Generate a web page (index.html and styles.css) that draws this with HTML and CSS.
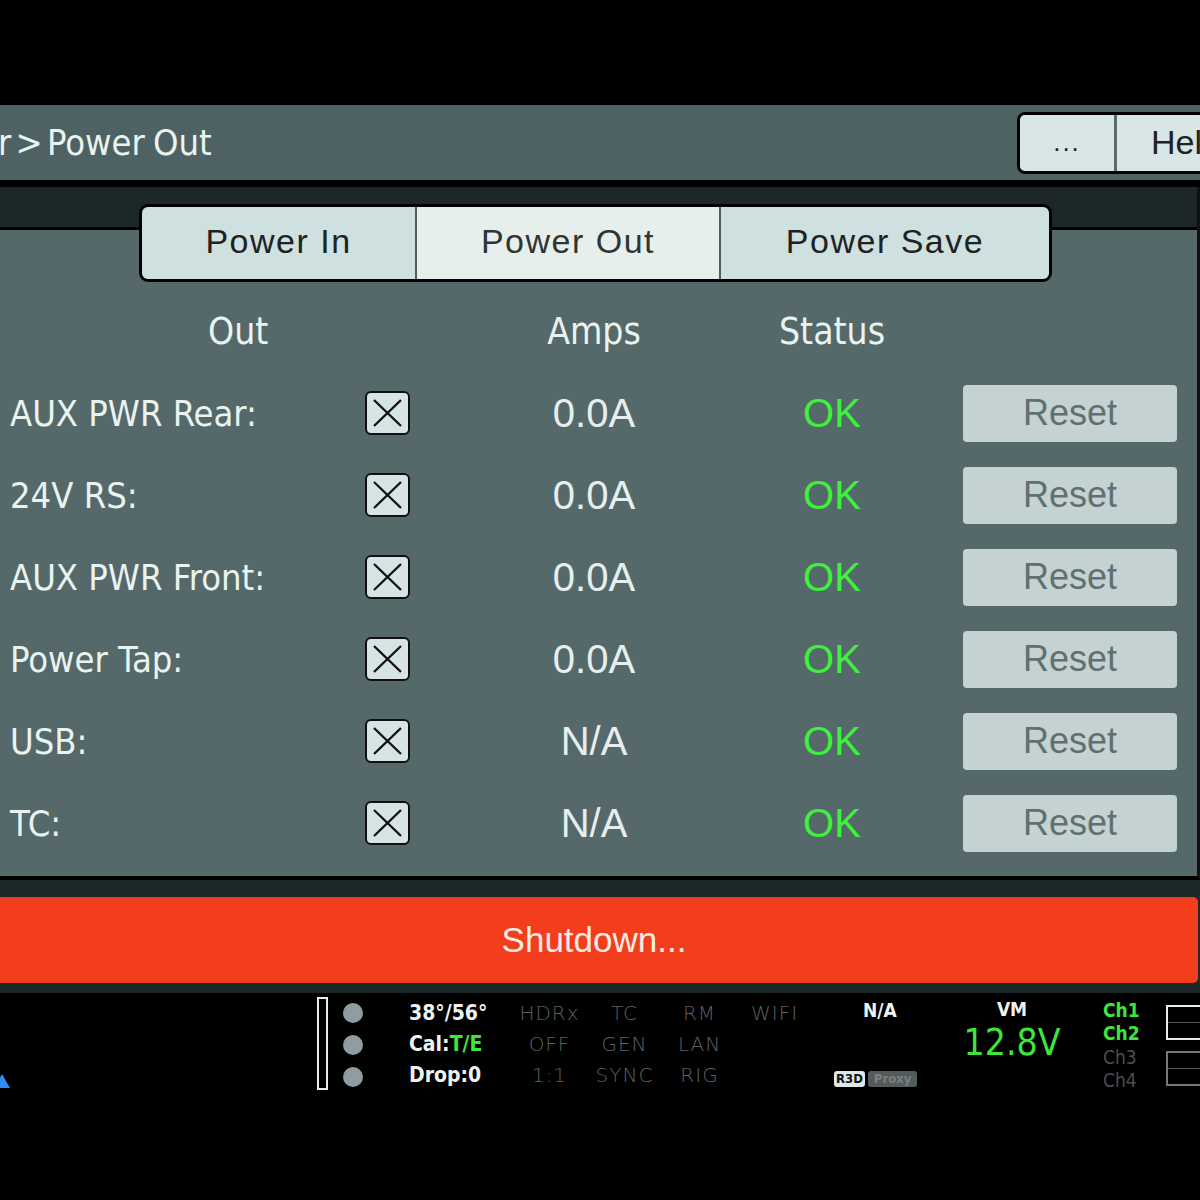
FILE: index.html
```html
<!DOCTYPE html>
<html lang="en">
<head>
    <meta charset="UTF-8">
    <meta name="viewport" content="width=device-width, initial-scale=1.0">
    <title>Power Out</title>
    <link rel="stylesheet" href="styles.css">
</head>
<body>
    <div class="screen">
        <header class="titlebar">
            <div class="crumb">r &gt; <span class="crumb-page">Power Out</span></div>
            <div class="title-buttons">
                <button class="tb-btn tb-more">...</button>
                <button class="tb-btn tb-help">Help</button>
            </div>
        </header>

        <section class="panel">
            <div class="tabs">
                <button class="tab tab-in">Power In</button>
                <button class="tab tab-out active">Power Out</button>
                <button class="tab tab-save">Power Save</button>
            </div>

            <div class="grid">
                <div class="head col-out">Out</div>
                <div class="head col-amps">Amps</div>
                <div class="head col-status">Status</div>
                <div class="head"></div>

                <div class="label">AUX PWR Rear:</div>
                <div class="check"><svg viewBox="0 0 41 40"><path d="M7 7 L34 33 M34 7 L7 33"/></svg></div>
                <div class="amps">0.0A</div>
                <div class="status">OK</div>
                <div class="reset-cell"><button class="reset">Reset</button></div>

                <div class="label">24V RS:</div>
                <div class="check"><svg viewBox="0 0 41 40"><path d="M7 7 L34 33 M34 7 L7 33"/></svg></div>
                <div class="amps">0.0A</div>
                <div class="status">OK</div>
                <div class="reset-cell"><button class="reset">Reset</button></div>

                <div class="label">AUX PWR Front:</div>
                <div class="check"><svg viewBox="0 0 41 40"><path d="M7 7 L34 33 M34 7 L7 33"/></svg></div>
                <div class="amps">0.0A</div>
                <div class="status">OK</div>
                <div class="reset-cell"><button class="reset">Reset</button></div>

                <div class="label">Power Tap:</div>
                <div class="check"><svg viewBox="0 0 41 40"><path d="M7 7 L34 33 M34 7 L7 33"/></svg></div>
                <div class="amps">0.0A</div>
                <div class="status">OK</div>
                <div class="reset-cell"><button class="reset">Reset</button></div>

                <div class="label">USB:</div>
                <div class="check"><svg viewBox="0 0 41 40"><path d="M7 7 L34 33 M34 7 L7 33"/></svg></div>
                <div class="amps">N/A</div>
                <div class="status">OK</div>
                <div class="reset-cell"><button class="reset">Reset</button></div>

                <div class="label">TC:</div>
                <div class="check"><svg viewBox="0 0 41 40"><path d="M7 7 L34 33 M34 7 L7 33"/></svg></div>
                <div class="amps">N/A</div>
                <div class="status">OK</div>
                <div class="reset-cell"><button class="reset">Reset</button></div>
            </div>
        </section>

        <div class="shutdown-wrap">
            <button class="shutdown">Shutdown...</button>
        </div>

        <footer class="statusbar">
            <div class="st-left"><span class="blue-tri"></span></div>
            <div class="st-meter"></div>
            <div class="st-dots">
                <span class="dot"></span>
                <span class="dot"></span>
                <span class="dot"></span>
            </div>
            <div class="st-info">
                <div>38°/56°</div>
                <div>Cal:<span class="green">T/E</span></div>
                <div>Drop:0</div>
            </div>
            <div class="st-modes">
                <span>HDRx</span><span>TC</span><span>RM</span><span>WIFI</span>
                <span>OFF</span><span>GEN</span><span>LAN</span><span></span>
                <span>1:1</span><span>SYNC</span><span>RIG</span><span></span>
            </div>
            <div class="st-media">
                <div class="na">N/A</div>
                <div class="badges">
                    <span class="badge r3d">R3D</span><span class="badge proxy">Proxy</span>
                </div>
            </div>
            <div class="st-volt">
                <div class="vm">VM</div>
                <div class="volts">12.8V</div>
            </div>
            <div class="st-ch">
                <div class="green">Ch1</div>
                <div class="green">Ch2</div>
                <div class="dim">Ch3</div>
                <div class="dim">Ch4</div>
            </div>
            <div class="st-rec">
                <div class="rec-box on"></div>
                <div class="rec-box"></div>
            </div>
        </footer>
    </div>
</body>
</html>
```

FILE: styles.css
```css
body {
    margin: 0;
    background: #000;
    font-family: "Liberation Sans", Arial, sans-serif;
    overflow: hidden;
}

.screen {
    width: 1200px;
    height: 1200px;
    padding-top: 105px;
    box-sizing: border-box;
    overflow: hidden;
}

/* title bar */
.titlebar {
    height: 75px;
    background: #4e6263;
    border-bottom: 7px solid #000;
    display: flex;
    align-items: center;
    justify-content: space-between;
}

.crumb {
    margin-left: -2px;
    font-family: "DejaVu Sans Condensed", sans-serif;
    font-size: 36px;
    word-spacing: -6px;
    color: #e9f3ef;
    white-space: nowrap;
}

.crumb-page {
    word-spacing: -2px;
}

.title-buttons {
    display: flex;
    flex-shrink: 0;
    height: 62px;
    margin-right: -120px;
    border: 3px solid #000;
    border-radius: 8px;
    overflow: hidden;
    box-sizing: border-box;
}

.tb-btn {
    background: #d8e6e6;
    border: none;
    font-family: "Liberation Sans", Arial, sans-serif;
    font-size: 34px;
    color: #222;
    padding: 0;
}

.tb-more {
    width: 97px;
    font-size: 26px;
    letter-spacing: 2px;
    border-right: 3px solid #5a6a6a;
}

.tb-help {
    width: 200px;
    text-align: left;
    padding-left: 34px;
}

/* main panel */
.panel {
    background: linear-gradient(to bottom, #1c2727 0, #1c2727 40px, #000 40px, #000 43px, #55696a 43px);
    border-right: 3px solid #111;
    border-bottom: 4px solid #000;
    padding: 17px 20px 12px 10px;
}

.tabs {
    display: flex;
    margin-left: 129px;
    width: 913px;
    height: 78px;
    border: 3px solid #000;
    border-radius: 9px;
    overflow: hidden;
    box-sizing: border-box;
}

.tab {
    background: #cfe0e0;
    border: none;
    padding: 0 0 4px;
    font-family: "Liberation Sans", Arial, sans-serif;
    font-size: 34px;
    letter-spacing: 1.5px;
    color: #1e2222;
}

.tab-in {
    width: 275px;
    border-right: 2px solid #4e5e5e;
}

.tab-out {
    width: 304px;
    border-right: 2px solid #4e5e5e;
}

.tab-save {
    flex: 1;
}

.tab.active {
    background: #e7efed;
    color: #2f3434;
}

.grid {
    display: grid;
    grid-template-columns: 355px 45px 368px 108px 1fr;
    grid-auto-rows: 82px;
    grid-template-rows: 90px;
    align-items: center;
    color: #e9f3ef;
}

.head {
    font-family: "DejaVu Sans Condensed", sans-serif;
    font-size: 37px;
    padding-top: 8px;
    text-align: center;
}

.col-out {
    grid-column: 1 / 3;
    text-align: left;
    padding-left: 198px;
}

.col-amps {
    grid-column: 3;
}

.label {
    font-family: "DejaVu Sans Condensed", sans-serif;
    font-size: 36px;
    white-space: nowrap;
}

.check {
    width: 45px;
    height: 44px;
    background: #d6e4e4;
    border: 2px solid #111;
    border-radius: 6px;
    box-sizing: border-box;
}

.check svg {
    display: block;
    width: 100%;
    height: 100%;
    stroke: #111;
    stroke-width: 2.4;
    fill: none;
}

.amps {
    text-align: center;
    font-size: 40px;
    color: #e6efed;
}

.status {
    text-align: center;
    font-size: 40px;
    color: #3df23a;
}

.reset-cell {
    display: flex;
    justify-content: flex-end;
}

.reset {
    width: 214px;
    height: 57px;
    background: #c4d2d2;
    border: none;
    border-radius: 4px;
    font-family: "Liberation Sans", Arial, sans-serif;
    font-size: 36px;
    color: #5f7070;
    padding: 0;
}

/* shutdown */
.shutdown-wrap {
    background: #1d2828;
    padding: 17px 2px 10px 0;
}

.shutdown {
    display: block;
    width: 100%;
    height: 86px;
    background: #f23e1c;
    border: none;
    border-radius: 0 5px 5px 0;
    font-family: "Liberation Sans", Arial, sans-serif;
    font-size: 35px;
    color: #fcebe4;
    padding: 0 10px 0 0;
}

/* bottom status bar */
.statusbar {
    display: flex;
    align-items: flex-start;
    padding-top: 2px;
    color: #eef3f0;
    font-family: "DejaVu Sans Condensed", sans-serif;
    font-weight: bold;
}

.statusbar > div {
    flex-shrink: 0;
}

.green {
    color: #3ee63a;
}

.dim {
    color: #4a4f4f;
    font-weight: normal;
}

.st-left {
    width: 317px;
    height: 100px;
    display: flex;
    align-items: flex-end;
}

.blue-tri {
    width: 0;
    height: 0;
    margin-left: -6px;
    margin-bottom: 7px;
    border-left: 8px solid transparent;
    border-right: 8px solid transparent;
    border-bottom: 14px solid #2f8cf0;
}

.st-meter {
    width: 11px;
    height: 93px;
    margin-top: 2px;
    border: 2px solid #e8eeee;
    box-sizing: border-box;
}

.st-dots {
    display: flex;
    flex-direction: column;
    gap: 12px;
    margin-left: 15px;
    margin-top: 8px;
}

.dot {
    width: 20px;
    height: 20px;
    border-radius: 50%;
    background: #8e9e9e;
}

.st-info {
    width: 103px;
    margin-left: 46px;
    margin-top: 3px;
    font-size: 21px;
    line-height: 31px;
}

.st-modes {
    display: grid;
    grid-template-columns: repeat(4, 75px);
    grid-auto-rows: 31px;
    margin-top: 3px;
    font-family: "DejaVu Sans", sans-serif;
    font-weight: 200;
    font-size: 20px;
    line-height: 31px;
    letter-spacing: 1px;
    color: #5b6060;
    text-align: center;
}

.st-media {
    width: 148px;
    height: 98px;
    display: flex;
    flex-direction: column;
    justify-content: space-between;
}

.na {
    padding-left: 51px;
    font-size: 19px;
    line-height: 30px;
}

.badges {
    display: flex;
    gap: 3px;
    margin-left: 22px;
    margin-bottom: 6px;
}

.badge {
    font-family: "DejaVu Sans Condensed", sans-serif;
    font-weight: bold;
    font-size: 13px;
    line-height: 16px;
    padding: 0 2px;
    border-radius: 3px;
}

.r3d {
    background: #dfe8e8;
    color: #111;
}

.proxy {
    background: #555b5b;
    color: #7a8080;
    padding: 0 6px;
}

.st-volt {
    width: 104px;
    text-align: center;
}

.vm {
    font-size: 19px;
    line-height: 28px;
}

.volts {
    font-weight: normal;
    font-size: 37px;
    line-height: 40px;
    color: #3ee63a;
}

.st-ch {
    margin-left: 39px;
    width: 50px;
    margin-top: 4px;
    font-size: 19px;
    line-height: 23.4px;
}

.st-rec {
    margin-left: 13px;
    margin-top: 10px;
    display: flex;
    flex-direction: column;
    gap: 11px;
}

.rec-box {
    width: 50px;
    height: 35px;
    border: 2px solid #777;
    box-sizing: border-box;
    background: linear-gradient(to bottom, transparent 15px, #555 15px, #555 16px, transparent 16px);
}

.rec-box.on {
    border-color: #e8eeee;
}
```
